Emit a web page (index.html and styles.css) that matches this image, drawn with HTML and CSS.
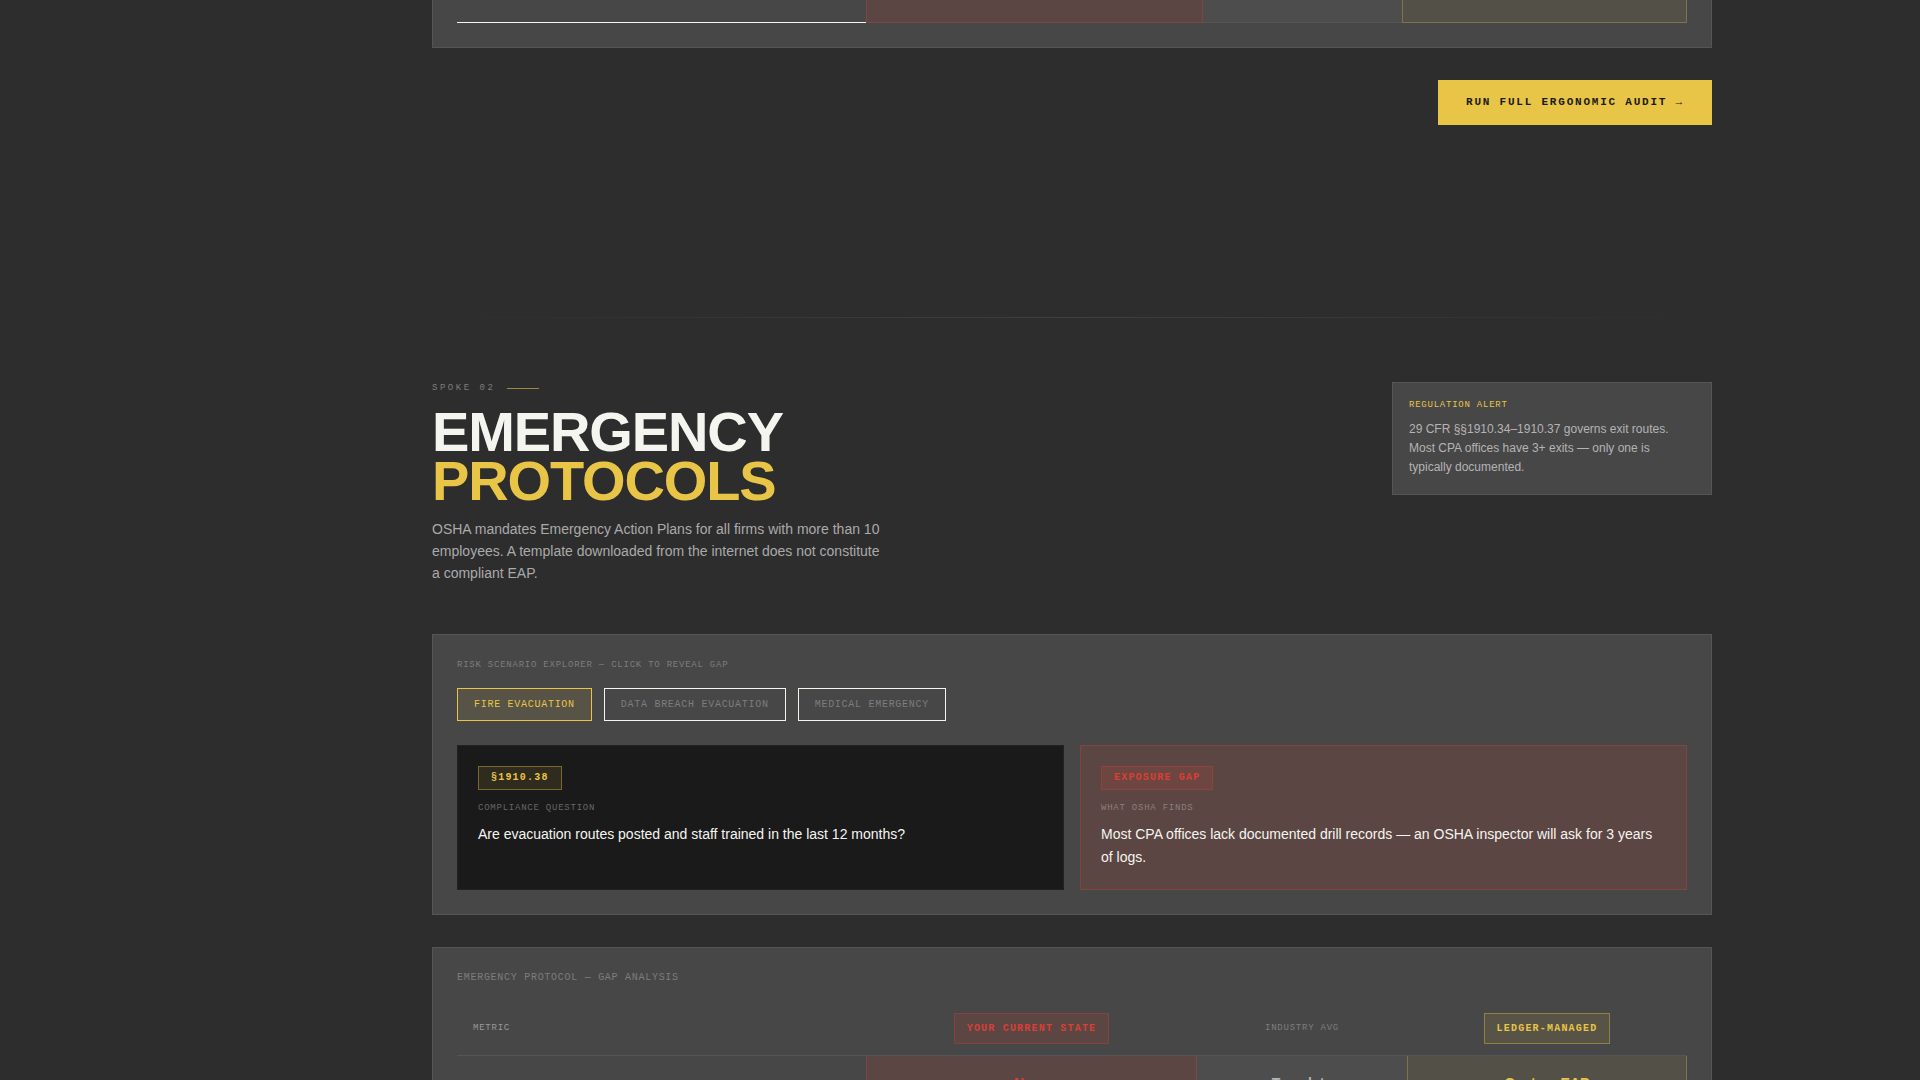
FILE: index.html
```html
<!DOCTYPE html>
<html lang="en">
<head>
<meta charset="utf-8">
<title>Emergency Protocols</title>
<link rel="stylesheet" href="styles.css">
</head>
<body>
<main class="main">
  <section class="spoke spoke-prev">
    <div class="panel panel-tail">
      <table class="gap-table">
        <tbody>
          <tr class="row-last">
            <td class="c-metric"></td><td class="c-risk"></td><td class="c-avg"></td><td class="c-managed"></td>
          </tr>
        </tbody>
      </table>
    </div>
    <div class="actions"><button type="button" class="cta">RUN FULL ERGONOMIC AUDIT →</button></div>
  </section>
  <hr class="divider">
  <section class="spoke">
    <header class="spoke-head">
      <div class="intro">
        <p class="eyebrow">SPOKE 02</p>
        <h2 class="title">EMERGENCY<br><span class="gold">PROTOCOLS</span></h2>
        <p class="lead">OSHA mandates Emergency Action Plans for all firms with more than 10 employees. A template downloaded from the internet does not constitute a compliant EAP.</p>
      </div>
      <aside class="alert">
        <h3 class="alert-label">REGULATION ALERT</h3>
        <p class="alert-text">29 CFR §§1910.34–1910.37 governs exit routes. Most CPA offices have 3+ exits — only one is typically documented.</p>
      </aside>
    </header>
    <div class="panel">
      <h3 class="small-label">RISK SCENARIO EXPLORER — CLICK TO REVEAL GAP</h3>
      <div class="tabs">
        <button type="button" class="tab tab-active">FIRE EVACUATION</button>
        <button type="button" class="tab">DATA BREACH EVACUATION</button>
        <button type="button" class="tab">MEDICAL EMERGENCY</button>
      </div>
      <div class="cards">
        <article class="card card-question">
          <span class="badge badge-gold">§1910.38</span>
          <h4 class="small-label">COMPLIANCE QUESTION</h4>
          <p class="card-text">Are evacuation routes posted and staff trained in the last 12 months?</p>
        </article>
        <article class="card card-risk">
          <span class="badge badge-red">EXPOSURE GAP</span>
          <h4 class="small-label label-light">WHAT OSHA FINDS</h4>
          <p class="card-text">Most CPA offices lack documented drill records — an OSHA inspector will ask for 3 years of logs.</p>
        </article>
      </div>
    </div>
    <div class="panel">
      <h3 class="panel-label">EMERGENCY PROTOCOL — GAP ANALYSIS</h3>
      <table class="gap-table gap-emergency">
        <thead>
          <tr>
            <th class="c-metric" scope="col">METRIC</th>
            <th class="c-risk" scope="col"><span class="badge badge-red badge-tall">YOUR CURRENT STATE</span></th>
            <th class="c-avg" scope="col">INDUSTRY AVG</th>
            <th class="c-managed" scope="col"><span class="badge badge-gold badge-tall">LEDGER-MANAGED</span></th>
          </tr>
        </thead>
        <tbody>
          <tr>
            <td class="c-metric"></td><td class="c-risk">None</td><td class="c-avg">Template</td><td class="c-managed">Custom EAP</td>
          </tr>
        </tbody>
      </table>
    </div>
  </section>
</main>
</body>
</html>
```
FILE: styles.css
```css
:root {
  --bg: #2d2d2d;
  --panel: #474747;
  --line: #555555;
  --paper: #f5f5f0;
  --gold: #e8c547;
  --red: #d93f35;
  --muted: #7d7d7d;
  --sans: "Liberation Sans", Arial, sans-serif;
  --mono: "Liberation Mono", "Courier New", monospace;
}
* { box-sizing: border-box; }
html { scrollbar-width: none; }
body {
  margin: 0;
  background: var(--bg);
  color: var(--paper);
  font-family: var(--sans);
}
h2, h3, h4, p { margin: 0; }
.main { padding-left: 224px; }
.spoke { max-width: 1280px; margin: 0 auto; }

.panel {
  margin-bottom: 32px;
  padding: 24px;
  border: 1px solid var(--line);
  background: var(--panel);
}
.panel-tail { padding-top: 0; border-top: 0; }

.actions { display: flex; justify-content: flex-end; }
.cta {
  padding: 16px 28px;
  border: 0;
  background: var(--gold);
  color: #1a1a1a;
  font: bold 11px/13px var(--mono);
  letter-spacing: 0.162em;
}
.divider {
  height: 1px;
  max-width: 1280px;
  margin: 192px auto 64px;
  border: 0;
  background: linear-gradient(90deg, transparent, #3f3f3f, transparent);
}

.spoke-head {
  display: flex;
  justify-content: space-between;
  align-items: flex-start;
  margin-bottom: 49px;
}
.intro { max-width: 456px; }
.eyebrow {
  display: flex;
  align-items: center;
  gap: 12px;
  margin-bottom: 12px;
  color: var(--muted);
  font: 9px/13px var(--mono);
  letter-spacing: 0.28em;
}
.eyebrow::after {
  content: "";
  width: 32px;
  height: 1px;
  background: var(--gold);
  opacity: 0.6;
}
.title {
  margin-bottom: 12px;
  font-size: 56px;
  line-height: 0.88;
  letter-spacing: -0.02em;
}
.gold { color: var(--gold); }
.lead { color: #aaaaaa; font-size: 14px; line-height: 1.6; }

.alert {
  width: 320px;
  padding: 16px;
  border: 1px solid var(--line);
  background: var(--panel);
}
.alert-label {
  margin-bottom: 9px;
  color: var(--gold);
  font: 9px/12px var(--mono);
  letter-spacing: 0.085em;
}
.alert-text { color: #b4b4b4; font-size: 12px; line-height: 1.6; }

.small-label {
  color: var(--muted);
  font: 9px/13px var(--mono);
  letter-spacing: 0.085em;
}
.panel-label {
  color: var(--muted);
  font: 10px/12px var(--mono);
  letter-spacing: 0.072em;
}
.tabs { display: flex; gap: 12px; margin: 16px 0 24px; }
.tab {
  padding: 10px 16px;
  border: 1px solid var(--paper);
  background: transparent;
  color: var(--muted);
  font: 10px/11px var(--mono);
  letter-spacing: 0.072em;
}
.tab-active {
  border-color: var(--gold);
  background: rgba(232, 197, 71, 0.1);
  color: var(--gold);
}

.cards { display: grid; grid-template-columns: 1fr 1fr; gap: 16px; }
.card { padding: 20px; border: 1px solid #222222; background: #1a1a1a; }
.card-risk { border-color: #82443f; background: #5b4643; }
.card .small-label { margin: 12px 0 8px; }
.card-question .small-label { color: #666666; }
.card .label-light { color: #8c7f7d; }
.card-text { font-size: 14px; line-height: 23px; }

.badge {
  display: inline-block;
  vertical-align: top;
  padding: 5px 12px 6px;
  border: 1px solid;
  font: bold 10px/11px var(--mono);
  letter-spacing: 0.12em;
}
.badge-tall { padding: 9px 12px; }
.badge-gold {
  border-color: rgba(232, 197, 71, 0.4);
  background: rgba(232, 197, 71, 0.1);
  color: var(--gold);
}
.badge-red {
  border-color: rgba(217, 64, 54, 0.3);
  background: rgba(217, 64, 54, 0.15);
  color: var(--red);
}

.gap-table {
  width: 100%;
  table-layout: fixed;
  border-collapse: separate;
  border-spacing: 0;
}
.gap-table td {
  padding: 19px 16px;
  text-align: center;
  font-size: 14px;
  line-height: 16px;
  font-weight: bold;
}
.gap-table .row-last td { height: 23px; padding: 0; }
td.c-metric { width: 409px; }
td.c-risk {
  width: 337px;
  border: 1px solid #7d4541;
  border-top: 0;
  background: #5b4643;
  color: var(--red);
}
td.c-avg {
  width: 199px;
  border-bottom: 1px solid var(--line);
  background: #4d4d4d;
  color: #b4b4b4;
}
td.c-managed {
  border: 1px solid #7c7549;
  border-top: 0;
  background: #535048;
  color: var(--gold);
}
.row-last .c-metric { border-bottom: 1px solid var(--paper); }
.gap-emergency { margin-top: 16px; }
.gap-emergency th {
  padding: 13px 16px 11px;
  border-bottom: 1px solid var(--line);
  color: var(--muted);
  font: 9px var(--mono);
  letter-spacing: 0.085em;
}
.gap-emergency th.c-metric { width: 409px; color: #999999; text-align: left; }
.gap-emergency th.c-risk { width: 331px; }
.gap-emergency th.c-avg { width: 210px; }
```
